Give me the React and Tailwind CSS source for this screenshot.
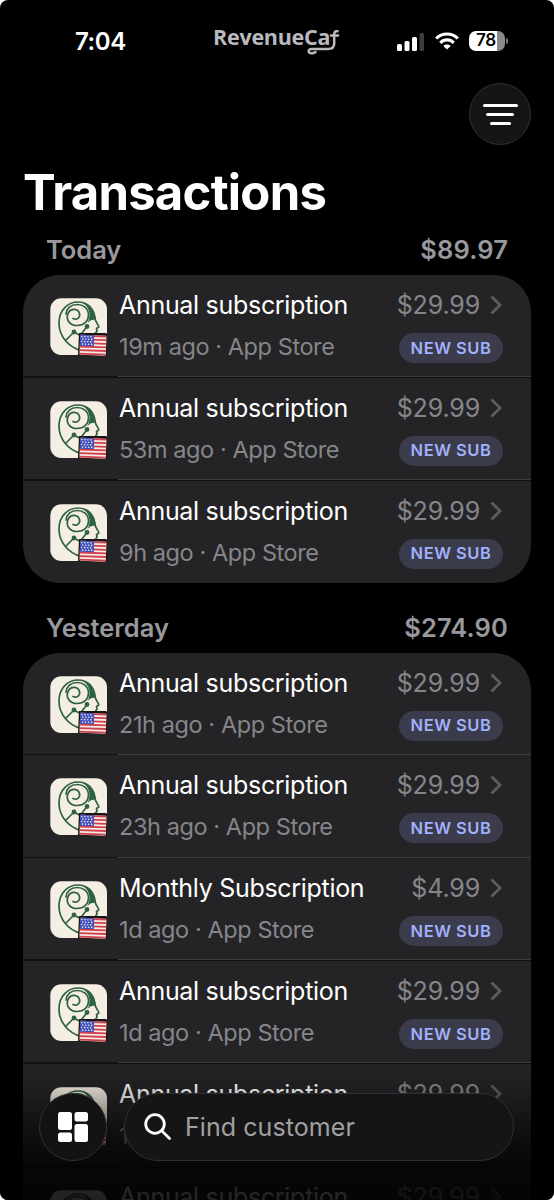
import React from "react";

const today = [
  ["Annual subscription", "19m ago · App Store", "$29.99"],
  ["Annual subscription", "53m ago · App Store", "$29.99"],
  ["Annual subscription", "9h ago · App Store", "$29.99"],
];

const yesterday = [
  ["Annual subscription", "21h ago · App Store", "$29.99"],
  ["Annual subscription", "23h ago · App Store", "$29.99"],
  ["Monthly Subscription", "1d ago · App Store", "$4.99"],
  ["Annual subscription", "1d ago · App Store", "$29.99"],
  ["Annual subscription", "1d ago · App Store", "$29.99"],
  ["Annual subscription", "1d ago · App Store", "$29.99"],
];

function AppIcon() {
  return (
    <svg viewBox="0 0 57 57" className="block size-[57px] overflow-visible">
      <rect x="0.3" y="0.3" width="56.700" height="56.700" rx="11" fill="#f5eee2" />
      <g fill="none" stroke="#2f6145" strokeWidth="1.700" strokeLinecap="round" strokeLinejoin="round">
        <path d="M31 52.500 C18 49 9 38 9 25 C9 12 18 4 28 4 C38 4 44 11 45 20 C45 24 49 27 48.800 29 L46.500 30.500 L47 33 L45 36" />
        <path d="M23 20.500 C27 22.500 30.500 19 29.500 15.500 C28 10.500 21 10 18.500 14.500 C15 21 19.500 27.500 27 27.500 C34 27.500 38.500 23 38.500 17 C38.500 10 33 6.500 27 6.500 C21 6.500 16.500 10.500 16 16" />
        <path d="M16 42 L24 34 L31 38" />
        <path d="M30.500 37 L37 28.500" />
      </g>
      <path d="M30 4 C40 7 41.500 18 37.500 25 C40 22 43 21 46 22 C45 12 40 5 30 4Z" fill="#2f6145" />
      <circle cx="24" cy="34" r="2.400" fill="#2f6145" />
      <circle cx="37" cy="28.500" r="2.400" fill="#2f6145" />
      <path d="M29 35 H56 Q57.500 35.500 57 38 V58 L28 57Z" fill="#161617" />
      <g transform="translate(30.200 36.800) rotate(2)">
        <rect width="26.300" height="20" rx="1.200" fill="#f6e9e9" />
        {[0, 1, 2, 3, 4, 5].map((i) => (
          <rect key={i} y={i * 3.6} width="26.300" height="1.800" fill="#cf4049" />
        ))}
        <rect width="14" height="11" fill="#4250b5" />
        {[1.5, 4, 6.5, 9].map((y, r) =>
          [1.8, 4.8, 7.8, 10.8].map((x) => (
            <circle key={x + "-" + y} cx={x + (r % 2)} cy={y + 0.2} r="0.800" fill="#e8eaff" />
          ))
        )}
      </g>
    </svg>
  );
}

function Row({ item, last }) {
  return (
    <div className="relative flex h-[102.800px] shrink-0 pl-[27px] pr-[28px]">
      <div className="pt-[23px]">
        <AppIcon />
      </div>
      <div className="ml-[12px] flex-1 whitespace-nowrap pt-[14px]">
        <div className="text-[25px] leading-[32px] tracking-[-0.300px] text-white">{item[0]}</div>
        <div className="mt-[10px] text-[23.500px] leading-[32px] tracking-[-0.420px] text-[#86868a]">{item[1]}</div>
      </div>
      <div className="flex flex-col items-end pt-[14px]">
        <div className="flex items-center">
          <span className="text-[25px] leading-[32px] tracking-[-0.150px] text-[#86868a]">{item[2]}</span>
          <svg viewBox="0 0 12 20" className="ml-[10px] mr-[1px] h-[20px] w-[12px]" fill="none" stroke="#5d5d61" strokeWidth="2.800">
            <path d="M1.500 1.500 L10 10 L1.500 18.500" />
          </svg>
        </div>
        <div className="mt-[12px] flex h-[30px] w-[104px] items-center justify-center rounded-full bg-[#3a3c4c] text-[16.500px] font-semibold tracking-[0.500px] text-[#a3b0fb]">
          NEW SUB
        </div>
      </div>
      {!last && (
        <div className="absolute bottom-0 left-0 right-0 h-[1.500px] bg-[#111112]">
          <div className="ml-[95px] h-px bg-[#3d3d40]" />
        </div>
      )}
    </div>
  );
}

function Section({ title, total, rows, className }) {
  return (
    <section className={className}>
      <div className="flex h-[41px] justify-between pl-[46px] pr-[46px] text-[25.500px] font-semibold leading-[32px] text-[#98989e]">
        <span className="tracking-[-0.050px]">{title}</span>
        <span className="tracking-[0.150px]">{total}</span>
      </div>
      <div className="mx-[23px] overflow-hidden rounded-[37px] bg-[#242426]">
        {rows.map((r, i) => (
          <Row key={i} item={r} last={i === rows.length - 1} />
        ))}
      </div>
    </section>
  );
}

export default function App() {
  return (
    <div className="h-[1200px] w-[554px] overflow-hidden bg-white font-['Inter','Liberation_Sans',sans-serif]">
      <main className="relative flex h-[1200px] flex-col overflow-hidden rounded-[8px] bg-black">
        <header className="flex h-[83px] shrink-0 items-start pl-[75px] pr-[46px]">
          <span className="w-[138px] pt-[26px] text-[24px] font-semibold leading-[32px] tracking-[-0.400px] text-white">7:04</span>
          <div className="relative w-[127px] whitespace-nowrap pt-[21px] font-['Open_Sans','Noto_Sans',sans-serif] text-[21.500px] font-bold leading-[32px] tracking-[-0.250px] text-[#b9b9be]">
            RevenueCa
            <svg viewBox="304 28 38 28" className="absolute left-[91px] top-[28px] h-[28px] w-[38px]" fill="none" stroke="#b9b9be" strokeWidth="2.500" strokeLinecap="round">
              <path d="M331 35.500 H338 M337.500 31.300 C335 30.800 334.200 32 334.200 35 V43.500 C334.200 47.500 331.500 49 328 49 H312 C308 49 307.300 52.800 311 53.200 C313 53.400 314.500 52.800 315.500 52" />
            </svg>
          </div>
          <div className="ml-auto flex items-center pt-[31px]">
            <svg viewBox="0 0 27 19" className="h-[19px] w-[27px]">
              <rect x="0" y="12" width="5" height="7" rx="1.500" fill="#fff" />
              <rect x="7.500" y="9" width="5" height="10" rx="1.500" fill="#fff" />
              <rect x="15" y="5" width="5" height="14" rx="1.500" fill="#fff" />
              <rect x="22.500" y="1" width="4.500" height="18" rx="1.500" fill="#3c3c3c" />
            </svg>
            <svg viewBox="0 0 24 18" className="ml-[11px] h-[18px] w-[24px]" fill="none" stroke="#fff" strokeWidth="3.200">
              <path d="M1.200 6.500 C7 0.500 17 0.500 22.800 6.500" />
              <path d="M5.300 10.800 C9 7 15 7 18.700 10.800" />
              <path d="M12 17.500 L8.300 13.900 C10.400 12 13.600 12 15.700 13.900Z" fill="#fff" stroke="none" />
            </svg>
            <div className="ml-[10px] flex h-[20px] w-[36px] items-center justify-center overflow-hidden rounded-[7px] bg-[linear-gradient(90deg,#fff_78%,#8a8a8a_78%)] pr-[2px] text-[17px] font-semibold tracking-[-0.300px] text-black">
              78
            </div>
            <div className="ml-[1px] h-[6px] w-[2px] rounded-r-full bg-[#777]" />
          </div>
        </header>
        <div className="flex h-[62px] shrink-0 justify-end pr-[23px]">
          <button className="flex size-[62px] flex-col items-center justify-center gap-[6px] rounded-full border-[1.500px] border-[#303032] bg-[#151516]">
            <span className="h-[3px] w-[35px] rounded-full bg-white" />
            <span className="h-[3px] w-[28px] rounded-full bg-white" />
            <span className="h-[3px] w-[21px] rounded-full bg-white" />
          </button>
        </div>
        <h1 className="mt-[18px] h-[60px] shrink-0 pl-[23px] text-[49px] font-bold leading-[60px] tracking-[-0.750px] text-white">Transactions</h1>
        <Section title="Today" total="$89.97" rows={today} className="mt-[11px] shrink-0" />
        <Section title="Yesterday" total="$274.90" rows={yesterday} className="mt-[28.200px] shrink-0" />
        <div className="absolute bottom-0 left-0 right-0 h-[140px] bg-[linear-gradient(180deg,rgba(0,0,0,0)_0%,rgba(0,0,0,0.150)_20%,rgba(0,0,0,0.550)_50%,rgba(0,0,0,0.840)_77%,rgba(0,0,0,0.860)_100%)]" />
        <nav className="absolute bottom-[39px] left-[39px] right-[40px] flex h-[68px] gap-[17px]">
          <button className="flex size-[68px] shrink-0 items-center justify-center rounded-full border-[1.500px] border-[#303032] bg-[#131313]">
            <svg viewBox="0 0 30 30" className="size-[30px]" fill="#fff">
              <rect x="0" y="0" width="14" height="18" rx="2.500" />
              <rect x="16.500" y="0" width="13.500" height="9.500" rx="2.500" />
              <rect x="0" y="20.500" width="14" height="9.500" rx="2.500" />
              <rect x="16.500" y="12" width="13.500" height="18" rx="2.500" />
            </svg>
          </button>
          <div className="flex flex-1 items-center rounded-full border-[1.500px] border-[#303032] bg-[#151516] pl-[19px]">
            <svg viewBox="0 0 28 28" className="size-[28px]" fill="none" stroke="#fff" strokeWidth="2.800" strokeLinecap="round">
              <circle cx="11" cy="11" r="9.300" />
              <path d="M18 18 L25.500 25.500" />
            </svg>
            <span className="ml-[13px] text-[25px] leading-[32px] tracking-[0.070px] text-[#a0a0a3]">Find customer</span>
          </div>
        </nav>
      </main>
    </div>
  );
}
